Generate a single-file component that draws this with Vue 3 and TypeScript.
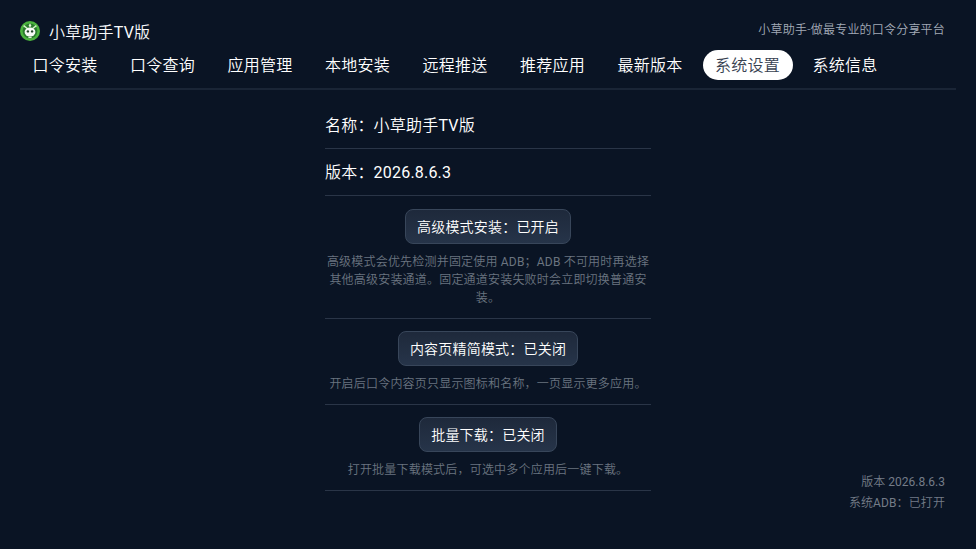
<script setup lang="ts">
const tabs = ['口令安装', '口令查询', '应用管理', '本地安装', '远程推送', '推荐应用', '最新版本', '系统设置', '系统信息']
const activeTab = '系统设置'

const options = [
  {
    label: '高级模式安装：已开启',
    desc: '高级模式会优先检测并固定使用 ADB；ADB 不可用时再选择其他高级安装通道。固定通道安装失败时会立即切换普通安装。',
  },
  { label: '内容页精简模式：已关闭', desc: '开启后口令内容页只显示图标和名称，一页显示更多应用。' },
  { label: '批量下载：已关闭', desc: '打开批量下载模式后，可选中多个应用后一键下载。' },
]

// Latin runs are regular weight, the CJK around them is light
const split = (text: string) => text.split(/([A-Za-z0-9.]+)/)
const isLatin = (part: string) => /^[A-Za-z0-9.]+$/.test(part)
</script>

<template>
  <div class="page">
    <header class="top">
      <div class="brand">
        <svg class="logo" viewBox="0 0 20 20" width="20" height="20">
          <circle cx="10" cy="10" r="10" fill="#4cb33e" />
          <circle cx="10" cy="10" r="7.4" fill="#2a7a2c" />
          <path d="M3.6 4.6 8 8M16.4 4.6 12 8" stroke="#d5f0c8" stroke-width="1.5" />
          <path d="M10 2.2 11.4 4.6 10 6.6 8.6 4.6z" fill="#e3f5d8" />
          <ellipse cx="10" cy="11" rx="5.4" ry="4.6" fill="#f7faf5" />
          <circle cx="7.9" cy="10.4" r="1.2" fill="#24452a" />
          <circle cx="12.1" cy="10.4" r="1.2" fill="#24452a" />
          <path d="M8.4 16.4h3.2" stroke="#dff2d6" stroke-width="1.4" />
        </svg>
        <span class="brand-name">小草助手<span class="latin">TV</span>版</span>
      </div>
      <span class="slogan">小草助手-做最专业的口令分享平台</span>
    </header>

    <nav class="tabs">
      <span v-for="tab in tabs" :key="tab" class="tab" :class="{ active: tab === activeTab }">{{ tab }}</span>
    </nav>

    <main class="settings">
      <div class="info-row">名称：小草助手<span class="latin">TV</span>版</div>
      <div class="info-row">版本：<span class="latin">2026.8.6.3</span></div>
      <section v-for="item in options" :key="item.label" class="option">
        <button class="option-btn" type="button">{{ item.label }}</button>
        <p class="option-desc">
          <span v-for="(part, i) in split(item.desc)" :key="i" :class="{ latin: isLatin(part) }">{{ part }}</span>
        </p>
      </section>
    </main>

    <footer class="corner">
      <div class="corner-version">版本 <span class="latin">2026.8.6.3</span></div>
      <div>系统<span class="latin">ADB</span>：已打开</div>
    </footer>
  </div>
</template>

<style>
html,
body {
  margin: 0;
  background: #0a1424;
}
</style>

<style scoped>
.page {
  position: relative;
  width: 976px;
  height: 549px;
  overflow: hidden;
  box-sizing: border-box;
  padding-top: 20px;
  background: #0a1424;
  color: #fff;
  font-family: Roboto, 'Noto Sans CJK SC', sans-serif;
  font-weight: 350;
  letter-spacing: 0.2px;
}

.latin {
  font-weight: 400;
}

.top {
  display: flex;
  align-items: center;
  justify-content: space-between;
  height: 22px;
  padding: 0 31px 0 20px;
}

.brand {
  display: flex;
  align-items: center;
  gap: 9px;
}

.logo {
  display: block;
}

.brand-name {
  font-size: 16px;
  color: #f8fafc;
}

.slogan {
  margin-top: -6px;
  font-size: 12px;
  color: #a3abb7;
}

.tabs {
  display: flex;
  gap: 7.5px;
  margin: 8px 20px 0;
  padding-bottom: 8px;
  border-bottom: 2px solid #1a2536;
}

.tab {
  width: 90px;
  height: 30px;
  border-radius: 15px;
  line-height: 32px;
  text-align: center;
  font-size: 16px;
  color: #fff;
}

.tab.active {
  background: #fff;
  color: #374151;
}

.settings {
  width: 326px;
  margin: 13px auto 0;
}

.info-row {
  padding: 12px 0;
  border-bottom: 1px solid #2a3547;
  font-size: 16px;
  line-height: 22px;
}

.info-row:first-child {
  padding-bottom: 11px;
}

.info-row + .info-row {
  padding: 13px 0 11px;
}

.option {
  display: flex;
  flex-direction: column;
  align-items: center;
  padding: 13px 0 11px;
  border-bottom: 1px solid #2a3547;
}

.option + .option {
  padding-top: 12px;
}

.option-btn {
  height: 35px;
  padding: 0 11px 2px;
  border: 1px solid #38465a;
  border-radius: 8px;
  background: linear-gradient(#1e293b, #263449);
  color: #fff;
  font: inherit;
  font-size: 14px;
  letter-spacing: inherit;
}

.option-desc {
  margin: 9px 0 0;
  font-size: 12px;
  line-height: 18px;
  text-align: center;
  color: #6b7480;
}

.corner {
  position: absolute;
  right: 31px;
  bottom: 35px;
  font-size: 12px;
  line-height: 21px;
  text-align: right;
  letter-spacing: 0.1px;
  color: #747c88;
}

.corner-version {
  letter-spacing: 0;
}
</style>
